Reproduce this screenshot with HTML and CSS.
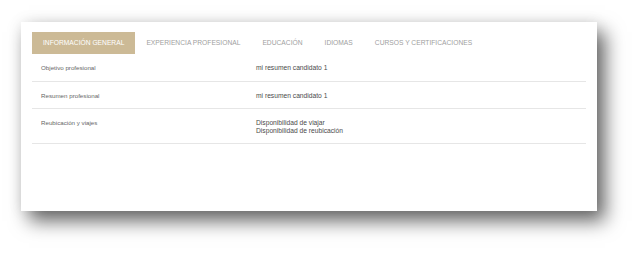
FILE: index.html
```html
<!DOCTYPE html>
<html lang="es">
<head>
    <meta charset="UTF-8">
    <meta name="viewport" content="width=device-width, initial-scale=1.0">
    <title>Candidato</title>
    <link rel="stylesheet" href="styles.css">
</head>
<body>
    <div class="tarjeta">
        <ul class="pestanas">
            <li class="activa">Información general</li>
            <li>Experiencia profesional</li>
            <li>Educación</li>
            <li>Idiomas</li>
            <li>Cursos y certificaciones</li>
        </ul>
        <div class="tabla">
            <div class="fila">
                <span class="etiqueta">Objetivo profesional</span>
                <span class="valor">mi resumen candidato 1</span>
            </div>
            <div class="fila">
                <span class="etiqueta">Resumen profesional</span>
                <span class="valor">mi resumen candidato 1</span>
            </div>
            <div class="fila">
                <span class="etiqueta">Reubicación y viajes</span>
                <span class="valor">Disponibilidad de viajar<br>Disponibilidad de reubicación</span>
            </div>
        </div>
    </div>
</body>
</html>
```

FILE: styles.css
```css
html, body {
    height: 100%;
}
body {
    margin: 0;
    padding: 22px 0 0 21px;
    box-sizing: border-box;
    background: #fff;
    font-family: "Liberation Sans", Arial, sans-serif;
}
.tarjeta {
    width: 576px;
    height: 189px;
    background: #fff;
    box-shadow: 8px 10px 18px rgba(0, 0, 0, 0.6), 0 0 14px rgba(0, 0, 0, 0.08);
}
.pestanas {
    display: flex;
    list-style: none;
    margin: 0;
    padding: 10px 11px 0;
}
.pestanas li {
    padding: 0 11px;
    height: 22px;
    line-height: 22px;
    font-size: 6.7px;
    text-transform: uppercase;
    color: #a0a0a0;
}
.pestanas li.activa {
    background: #ccba96;
    color: #fff;
}
.tabla {
    margin: 0 11px;
}
.fila {
    display: grid;
    grid-template-columns: 215px 1fr;
    padding: 10px 0 9px 9px;
    border-bottom: 1px solid #e6e6e6;
    line-height: 7.5px;
}
.etiqueta {
    font-size: 6.2px;
    color: #666;
}
.valor {
    font-size: 6.7px;
    color: #4a4a4a;
}
```
